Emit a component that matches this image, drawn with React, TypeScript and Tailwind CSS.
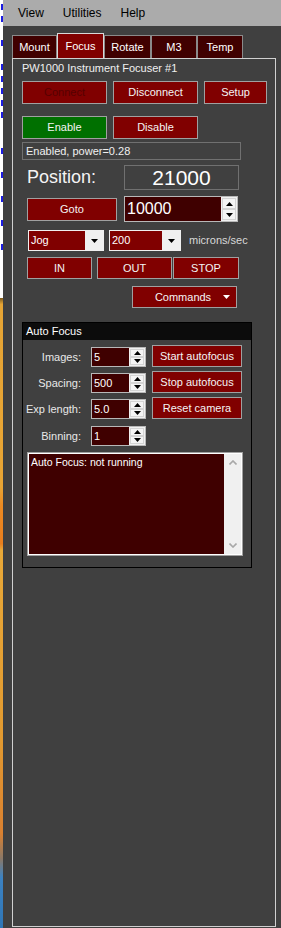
import type { ReactNode } from 'react'

// ---------------------------------------------------------------------------
// Small pieces
// ---------------------------------------------------------------------------

function Tri({ up = false, color = '#000' }: { up?: boolean; color?: string }) {
  return (
    <svg width="7" height="4" viewBox="0 0 7 4">
      <path d={up ? 'M0 4 L3.5 0 L7 4 Z' : 'M0 0 L7 0 L3.5 4 Z'} fill={color} />
    </svg>
  )
}

function Btn({
  children,
  className = '',
  dim = false,
  green = false,
}: {
  children: ReactNode
  className?: string
  dim?: boolean
  green?: boolean
}) {
  return (
    <div
      className={`flex shrink-0 items-center justify-center border border-[#a0a0a0] text-[11px] ${
        green ? 'bg-[#007000]' : 'bg-[#800000]'
      } ${dim ? 'text-[#560000]' : 'text-[#f4f4f4]'} ${className}`}
    >
      {children}
    </div>
  )
}

function Spin({ value, className = '', textClass = '' }: { value: string; className?: string; textClass?: string }) {
  return (
    <div className={`flex shrink-0 border border-[#b8b8b8] bg-[#3f0000] ${className}`}>
      <div className={`flex flex-1 items-center pl-[2px] text-white ${textClass}`}>{value}</div>
      <div className="flex w-[16px] flex-col bg-[#f0f0f0] p-[1px]">
        <div className="flex flex-1 items-center justify-center border border-[#d4d4d4] bg-[#f4f4f4]">
          <Tri up />
        </div>
        <div className="flex flex-1 items-center justify-center border border-[#d4d4d4] bg-[#f4f4f4]">
          <Tri />
        </div>
      </div>
    </div>
  )
}

function Select({ value, className = '' }: { value: string; className?: string }) {
  return (
    <div className={`flex h-[21px] shrink-0 border border-[#f0f0f0] bg-[#800000] ${className}`}>
      <div className="flex flex-1 items-center pl-[2px] text-[11px] text-white">{value}</div>
      <div className="flex w-[18px] items-center justify-center bg-[#f0f0f0]">
        <Tri />
      </div>
    </div>
  )
}

function Chevron({ up = false }: { up?: boolean }) {
  return (
    <svg width="8" height="5" viewBox="0 0 8 5">
      <path
        d={up ? 'M0.5 4.5 L4 1 L7.5 4.5' : 'M0.5 0.5 L4 4 L7.5 0.5'}
        fill="none"
        stroke="#a8a8a8"
        strokeWidth="1.6"
      />
    </svg>
  )
}

// ---------------------------------------------------------------------------
// Background window strip on the far left (edges of blue text peeking out)
// ---------------------------------------------------------------------------

const STRIP_MARKS = [1, 1, 0, 1, 0, 1, 1, 1, 1, 1, 0, 0, 1, 0, 1, 0, 1, 0, 1, 0, 1]

function LeftStrip() {
  return (
    <div className="flex w-[3px] shrink-0 flex-col overflow-hidden">
      <div className="h-[298px] bg-white">
        {STRIP_MARKS.map((m, i) => (
          <div key={i} className="h-[12px] pt-[4px]">
            {m === 1 && <div className="ml-[1px] h-[6px] w-[2px] bg-[#1c1ce0]" />}
          </div>
        ))}
      </div>
      <div className="flex-1 bg-[linear-gradient(to_bottom,#7a5a20_0%,#e6a535_1%,#e8a434_30%,#ec8a22_33%,#e87e1e_39%,#e8a838_40%,#e29a30_70%,#d98030_85%,#8a7868_89%,#3c82c2_92%,#2f76b6_100%)]" />
    </div>
  )
}

// ---------------------------------------------------------------------------
// Tabs
// ---------------------------------------------------------------------------

const TABS = [
  { name: 'Mount', w: 'w-[45px]' },
  { name: 'Focus', w: 'w-[47px]', active: true },
  { name: 'Rotate', w: 'w-[47px]' },
  { name: 'M3', w: 'w-[46px]' },
  { name: 'Temp', w: 'w-[46px]' },
]

function TabStrip() {
  return (
    <div className="ml-[9px] flex h-[32px] items-end pt-[7px]">
      {TABS.map((t) =>
        t.active ? (
          <div
            key={t.name}
            className={`flex h-[25px] items-center justify-center border border-b-0 border-[#d8d8d8] bg-[#800000] text-[11px] text-white ${t.w}`}
          >
            {t.name}
          </div>
        ) : (
          <div
            key={t.name}
            className={`flex h-[23px] items-center justify-center border border-b-0 border-[#8a8a8a] bg-[#400000] text-[11px] text-white ${t.w}`}
          >
            {t.name}
          </div>
        ),
      )}
    </div>
  )
}

// ---------------------------------------------------------------------------
// Auto focus group
// ---------------------------------------------------------------------------

const AF_ROWS = [
  { label: 'Images:', value: '5', btn: 'Start autofocus' },
  { label: 'Spacing:', value: '500', btn: 'Stop autofocus' },
  { label: 'Exp length:', value: '5.0', btn: 'Reset camera' },
]

function AutoFocus() {
  return (
    <div className="mt-[14px] flex h-[246px] w-[230px] flex-col border border-black">
      <div className="flex h-[17px] items-center bg-[#0c0c0c] pl-[3px] text-[11px] text-white">Auto Focus</div>
      {AF_ROWS.map((r, i) => (
        <div key={r.label} className={`flex h-[22px] items-end ${i === 0 ? 'mt-[5px]' : 'mt-[4px]'}`}>
          <div className="flex h-[20px] w-[58px] items-center justify-end text-[11px] text-[#e8e8e8]">{r.label}</div>
          <Spin value={r.value} className="ml-[10px] h-[20px] w-[55px]" textClass="text-[11px]" />
          <Btn className="ml-[6px] h-[22px] w-[90px]">{r.btn}</Btn>
        </div>
      ))}
      <div className="mt-[5px] flex h-[22px] items-end">
        <div className="flex h-[20px] w-[58px] items-center justify-end text-[11px] text-[#e8e8e8]">Binning:</div>
        <Spin value="1" className="ml-[10px] h-[20px] w-[55px]" textClass="text-[11px]" />
      </div>
      <div className="ml-[4px] mt-[6px] flex h-[104px] w-[216px] border border-[#a0a0a0] bg-white p-[1px]">
        <div className="flex-1 bg-[#3f0000] pl-[2px] pt-[2px] text-[10.5px] leading-[13px] text-white">
          Auto Focus: not running
        </div>
        <div className="flex w-[17px] flex-col items-center justify-between bg-[#f0f0f0] py-[6px]">
          <Chevron up />
          <Chevron />
        </div>
      </div>
    </div>
  )
}

// ---------------------------------------------------------------------------
// Page
// ---------------------------------------------------------------------------

export default function App() {
  return (
    <div className="flex h-[928px] w-[281px] overflow-hidden bg-[#404040] font-['Liberation_Sans',Arial,sans-serif]">
      <LeftStrip />
      <div className="flex flex-1 flex-col">
        {/* Menu bar */}
        <div className="flex h-[26px] shrink-0 items-center gap-[19px] bg-[#ababab] pl-[15px] text-[12px] text-black">
          <span>View</span>
          <span>Utilities</span>
          <span>Help</span>
        </div>

        <TabStrip />

        {/* Tab page */}
        <div className="ml-[9px] flex h-[869px] w-[264px] flex-col border border-[#d0d0d0] pl-[9px] pt-[3px]">
          <div className="text-[11px] leading-[13px] text-[#f0f0f0]">PW1000 Instrument Focuser #1</div>

          <div className="mt-[6px] flex gap-[6px]">
            <Btn dim className="h-[23px] w-[85px]">Connect</Btn>
            <Btn className="h-[23px] w-[85px]">Disconnect</Btn>
            <Btn className="h-[23px] w-[63px]">Setup</Btn>
          </div>

          <div className="mt-[12px] flex gap-[6px]">
            <Btn green className="h-[23px] w-[85px]">Enable</Btn>
            <Btn className="h-[23px] w-[85px]">Disable</Btn>
          </div>

          <div className="mt-[3px] flex h-[18px] w-[219px] items-center border border-[#707070] pl-[3px] text-[11px] text-[#f0f0f0]">
            Enabled, power=0.28
          </div>

          {/* Position */}
          <div className="ml-[5px] mt-[5px] flex h-[25px] items-center">
            <div className="w-[97px] text-[18px] text-[#f4f4f4]">Position:</div>
            <div className="flex h-[25px] w-[115px] items-center justify-center border border-[#707070] text-[21px] text-white">
              21000
            </div>
          </div>

          <div className="ml-[5px] mt-[6px] flex h-[26px] items-center">
            <Btn className="h-[23px] w-[90px]">Goto</Btn>
            <Spin value="10000" className="ml-[7px] h-[26px] w-[114px]" textClass="text-[16px]" />
          </div>

          <div className="ml-[6px] mt-[8px] flex h-[21px] items-center">
            <Select value="Jog" className="w-[76px]" />
            <Select value="200" className="ml-[5px] w-[72px]" />
            <span className="ml-[8px] text-[11px] text-[#d8d8d8]">microns/sec</span>
          </div>

          <div className="ml-[5px] mt-[6px] flex">
            <Btn className="h-[22px] w-[65px]">IN</Btn>
            <Btn className="ml-[5px] h-[22px] w-[75px]">OUT</Btn>
            <Btn className="ml-[1px] h-[22px] w-[66px]">STOP</Btn>
          </div>

          <div className="relative ml-[110px] mt-[7px] flex h-[22px] w-[105px] items-center justify-center border border-[#a0a0a0] bg-[#800000] pr-[3px] text-[11px] text-[#f4f4f4]">
            Commands
            <span className="absolute right-[6px] top-[8px]">
              <Tri color="#fff" />
            </span>
          </div>

          <AutoFocus />
        </div>
      </div>
    </div>
  )
}
